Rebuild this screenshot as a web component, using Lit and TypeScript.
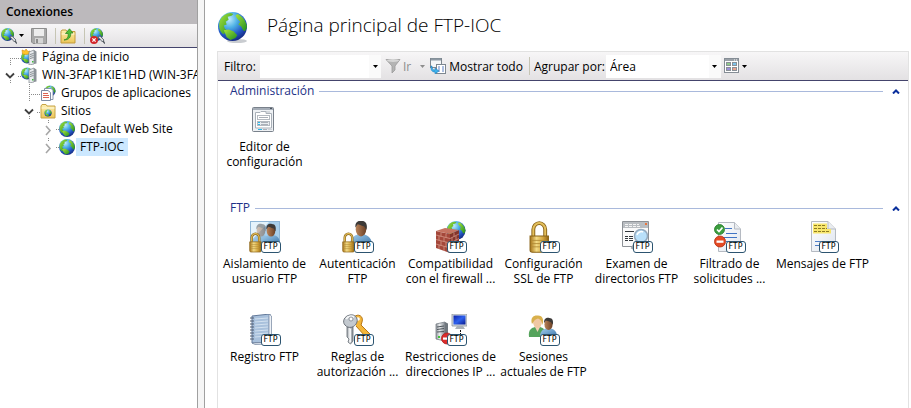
import { LitElement, html, svg, css, nothing, type TemplateResult } from "lit";
import { customElement, state } from "lit/decorators.js";
import { classMap } from "lit/directives/class-map.js";

/* ---------- shared drawing parts ---------- */

const defs = html`
  <svg class="defs" aria-hidden="true">
    <defs>
      <radialGradient id="sea" cx=".38" cy=".25" r=".8">
        <stop offset="0" stop-color="#c4ecfb" /><stop offset=".35" stop-color="#4fb2e6" />
        <stop offset=".7" stop-color="#2356c4" /><stop offset="1" stop-color="#14247a" />
      </radialGradient>
      <linearGradient id="land" x1="0" y1="0" x2="1" y2="1">
        <stop offset="0" stop-color="#a8e43c" /><stop offset="1" stop-color="#1d8c1f" />
      </linearGradient>
      <linearGradient id="gold" x1="0" y1="0" x2="1" y2="0">
        <stop offset="0" stop-color="#a87418" /><stop offset=".35" stop-color="#f3db86" />
        <stop offset=".7" stop-color="#d3a53c" /><stop offset="1" stop-color="#936514" />
      </linearGradient>
      <linearGradient id="steel" x1="0" y1="0" x2="1" y2="0">
        <stop offset="0" stop-color="#8d9399" /><stop offset=".4" stop-color="#eceef0" />
        <stop offset="1" stop-color="#7d848b" />
      </linearGradient>
      <linearGradient id="paper" x1="0" y1="0" x2="1" y2="1">
        <stop offset="0" stop-color="#ffffff" /><stop offset="1" stop-color="#dfe5ee" />
      </linearGradient>
      <linearGradient id="skin" x1="0" y1="0" x2="1" y2="0">
        <stop offset="0" stop-color="#b98258" /><stop offset="1" stop-color="#6b4127" />
      </linearGradient>
      <linearGradient id="shirt" x1="0" y1="0" x2="1" y2="1">
        <stop offset="0" stop-color="#a5d0ee" /><stop offset="1" stop-color="#3c76ab" />
      </linearGradient>
      <linearGradient id="folder" x1="0" y1="0" x2="0" y2="1">
        <stop offset="0" stop-color="#fdf0b2" /><stop offset="1" stop-color="#ecc556" />
      </linearGradient>
      <linearGradient id="screen" x1="0" y1="0" x2="1" y2="1">
        <stop offset="0" stop-color="#0a1fa8" /><stop offset=".5" stop-color="#2f62ee" />
        <stop offset="1" stop-color="#0a1a90" />
      </linearGradient>
    </defs>
  </svg>
`;

const globe = (cx: number, cy: number, r: number) => {
  const s = r / 15;
  return svg`<g transform="translate(${cx} ${cy}) scale(${s})">
    <circle r="15" fill="url(#sea)"/>
    <path d="M-13 -6C-11 -11 -6 -14 -2 -14L1 -13L-1 -11L-5 -10L-4 -7L-7 -5L-6 -2L-9 -1L-8 2L-6 4L-9 8C-13 6 -15 0 -13 -6Z" fill="url(#land)"/>
    <path d="M5 -13C10 -11 14 -6 15 0C14 4 13 6 11 4L9 0L6 -2L8 -5L5 -8L3 -11Z" fill="url(#land)"/>
    <path d="M-9 4L-4 3L1 5L5 9L3 12L-2 14L-6 11Z" fill="url(#land)"/>
  </g>`;
};

const padlock = (x: number, y: number, s: number) => svg`<g transform="translate(${x} ${y}) scale(${s})">
  <path d="M4 13V7a5.500 6 0 0 1 11 0V13" fill="none" stroke="#8a6418" stroke-width="3.600"/>
  <path d="M4 13V7a5.500 6 0 0 1 11 0V13" fill="none" stroke="#e3bf5c" stroke-width="1.800"/>
  <path d="M1 13H18V26Q18 28 16 28H3Q1 28 1 26Z" fill="url(#gold)" stroke="#8a6418"/>
  <path d="M2 17H17M2 20H17M2 23H17" stroke="#b08a35" stroke-width=".800"/>
</g>`;

const man = (x: number, y: number, s: number) => svg`<g transform="translate(${x} ${y}) scale(${s})">
  <path d="M0 22C0 15 4 13 8 12H12C17 13 20 16 20 22Z" fill="url(#shirt)"/>
  <ellipse cx="10" cy="7.500" rx="4.800" ry="6.500" fill="url(#skin)"/>
  <path d="M5 6C4 1 8 -1 11 0C15 0 16 4 15 8L13 5C10 4 8 3 7 3Z" fill="#3d3a38"/>
</g>`;

const tower = svg`<path d="M8 3L13 1V15L8 16Z" fill="#e9ecef" stroke="#7f868c" stroke-width=".700"/>
  <path d="M9 5.500L12.500 4.500M9 7.500L12.500 6.500M9 9.500L12.500 8.500" stroke="#6c7479" stroke-width=".800"/>
  <path d="M13 1L15.500 2.500V14.500L13 15Z" fill="#8b9298"/><rect x="11" y="12" width="1.500" height="1.500" fill="#41b83a"/>`;

const large = (body: unknown) => html`<svg class="i32" viewBox="0 0 32 32" aria-hidden="true">${body}</svg>`;
const small = (body: unknown) => html`<svg class="i16" viewBox="0 0 16 16" aria-hidden="true">${body}</svg>`;

const plug = svg`<path d="M9 9L11 8L15 12L13.500 14Z" fill="#d6d9dc" stroke="#60676e" stroke-width=".900"/>
  <path d="M14 13L16 15.500" stroke="#4d545b" stroke-width="1.400"/>`;

const icon16 = {
  connect: small(svg`${globe(6.5, 6.5, 6.5)}${plug}`),
  save: small(svg`<path d="M.500 .500H15.500V15.500H2L.500 14Z" fill="#a9a9a9" stroke="#8e8e8e"/>
    <rect x="3" y="1" width="10" height="7" fill="#ececec"/><rect x="4" y="10" width="8" height="5.500" fill="#d5d5d5"/>
    <rect x="5" y="11" width="2" height="4" fill="#8c8c8c"/>`),
  up: small(svg`<path d="M1 3.500L2 2H6L7 3.500H15V15H1Z" fill="url(#folder)" stroke="#c39b3c"/>
    <path d="M1.500 6H14.500" stroke="#fff8d8"/>
    <path d="M4 12C8 11 8.500 8 8 5.500H5.500L9.500 .800L13 5H10.700C11 9 9 12 4 12Z" fill="#51bf38" stroke="#24801b" stroke-width=".700"/>`),
  disconnect: small(svg`${globe(7.5, 6.5, 6.5)}${plug}<circle cx="5" cy="12" r="4" fill="#d2262b"/>
    <path d="M3.400 10.400L6.600 13.600M6.600 10.400L3.400 13.600" stroke="#fff" stroke-width="1.300"/>`),
  start: small(svg`${globe(6, 8.5, 6)}<path d="M1 1L4 2L5 0L7 2.500L9 2L8 5L5 5.500L1.500 5Z" fill="#ffc528" stroke="#d88d14" stroke-width=".600"/>${tower}`),
  server: small(svg`${globe(6, 6.5, 6)}${tower}`),
  pools: small(svg`${globe(10, 6, 5.5)}
    <path d="M4.500 3.500H11L13 5V14.500H4.500Z" fill="#fff" stroke="#7d8ca5" stroke-width=".900"/>
    <path d="M1.500 5.500H8L10.500 7.500V15.500H1.500Z" fill="#fff" stroke="#6f7f9b" stroke-width=".900"/>
    <path d="M3 8.500H8M3 10.500H9M3 12.500H9" stroke="#d9523f" stroke-width=".900"/>`),
  sites: small(svg`<path d="M1 3L2 1.500H6L7 3H15V15H1Z" fill="url(#folder)" stroke="#c7a245"/>
    <path d="M1.500 5H14.500" stroke="#fff9dd"/>${globe(8, 10, 3.6)}`),
  site: small(globe(8, 8, 8)),
  funnel: small(svg`<path d="M1 1.500H15L10 8V12L7 15V8Z" fill="#b4b4b4" stroke="#9a9a9a" stroke-width=".800"/>
    <ellipse cx="8" cy="2.500" rx="6" ry="1.400" fill="#d7d7d7"/>`),
  showAll: small(svg`<rect x=".500" y=".500" width="11" height="9" fill="#f4f6f8" stroke="#7d8790"/>
    <path d="M1 1.500H11" stroke="#8d98a3" stroke-width="2"/>
    <rect x="6.500" y="6.500" width="9" height="9" fill="#fff" stroke="#7d8790"/>
    <path d="M8 9H10M12 9H14M8 11H10M12 11H14M8 13H10M12 13H14" stroke="#5b7fc4"/>
    <path d="M2 8C2 11 3 12 5 12V10L9 13L5 16V14C2 14 .500 12 1 8Z" fill="#3fb2ea" stroke="#1674b8" stroke-width=".500"/>`),
  view: small(svg`<rect x=".500" y=".500" width="14" height="14" fill="#fff" stroke="#858d95"/>
    <path d="M1 2H14" stroke="#9aa1a8" stroke-width="2"/><path d="M10 2H11M12 2H13" stroke="#fff"/>
    <g stroke="#8a9097"><rect x="2.500" y="4.500" width="4" height="3" fill="#8fc98b"/><rect x="8.500" y="4.500" width="4" height="3" fill="#7ec3ea"/>
    <rect x="2.500" y="9.500" width="4" height="3" fill="#9a8fd8"/><rect x="8.500" y="9.500" width="4" height="3" fill="#e8a08c"/></g>`),
};

const icon32 = {
  globe: large(svg`<ellipse cx="19" cy="29" rx="10" ry="2" fill="#c9ccd0"/>${globe(14.5, 14.5, 14.5)}`),
  editor: large(svg`<rect x="3.500" y="3.500" width="21" height="24" rx="1" fill="#eef1f4" stroke="#79818b"/>
    <path d="M4 5H24" stroke="#a5adb7" stroke-width="2"/><path d="M21 4.500H23" stroke="#4d5560" stroke-width="1"/>
    <path d="M6.500 24V8.500H11L12 7.500H17V9.500H22.500V24Z" fill="#fff" stroke="#a9b0b8"/>
    <path d="M17 8H21" stroke="#b9bfc6" stroke-width="1"/>
    <rect x="8.500" y="11.500" width="12" height="4" fill="#fff" stroke="#b4bac1"/><path d="M10 13.500H19" stroke="#aab0b8"/>
    <rect x="8.500" y="17.500" width="12" height="4" fill="#e9edf0" stroke="#b4bac1"/><path d="M12 18.500H19M12 20.500H19" stroke="#aab0b8"/>
    <path d="M9 18.500H11M9 20.500H11" stroke="#27b7ea"/>
    <path d="M9 25.500H13" stroke="#27b7ea"/><path d="M14 25.500H18" stroke="#aab0b8"/><path d="M19 25.500H23" stroke="#cfd3d8"/>`),
  isolation: large(svg`<rect x="1.500" y=".500" width="29" height="23" fill="#a9cfeb" stroke="#8fb6d6"/>
    <path d="M2 1H20L2 20Z" fill="#e5f3fb"/><g opacity=".45">${man(3, 3, 0.9)}</g>${man(13, 3, 0.9)}${padlock(0, 12, 0.68)}`),
  auth: large(svg`${man(8, 0, 1.1)}${padlock(0, 12, 0.68)}`),
  firewall: large(svg`${globe(21, 9.5, 9.5)}
    <path d="M1 10L15 13V32L1 27Z" fill="#a4473a"/><path d="M15 13L24 9V27L15 32Z" fill="#84342b"/><path d="M1 10L10 7L24 9L15 13Z" fill="#c67462"/>
    <path d="M1 14L15 17.500L24 13M1 18.500L15 22L24 17.500M1 23L15 27L24 22M6 11V15.500M11 12.500V16.500M4 15V19.500M9 16.500V20.500M6 20V24.500M11 21V26M4 24V28M9 25.500V30M19 11.500V15.500M17 16.500V21M21 15V19.500M19 20.500V25" fill="none" stroke="#dca090" stroke-width=".700"/>`),
  lock: large(padlock(1, 1, 1.08)),
  browse: large(svg`<path d="M1.500 .500H27.500V25.500H1.500Z" fill="#fafafa" stroke="#8d9196"/>
    <rect x="2" y="1" width="25" height="6" fill="#b9bdc1"/><path d="M4 3.500H18M4 5.500H20" stroke="#f4f4f4" stroke-dasharray="3 1"/><rect x="24" y="2" width="2" height="2" fill="#e8743c"/>
    <path d="M4 10.500H13M4 15.500H7M4 17.500H7M4 19.500H7M8 15.500H12M8 17.500H12M8 19.500H12" stroke="#33383d" stroke-width="1"/>
    <path d="M15 21L11 28" stroke="#9ea4aa" stroke-width="3"/>
    <circle cx="20" cy="15" r="6.500" fill="#b9e0fa" stroke="#94a9bd" stroke-width="1.500"/><path d="M16 14C17 11 20 10 22 11" stroke="#fff" stroke-width="1.500" fill="none"/>`),
  filter: large(svg`<path d="M4.500 1.500H20.500L26.500 8V30.500H4.500Z" fill="url(#paper)" stroke="#b5bac2"/><path d="M20.500 1.500V8H26.500" fill="#e9ecef" stroke="#b5bac2"/>
    <path d="M11 7.500H18M12 12.500H23M9 16.500H23M12 20.500H23" stroke="#3f74c4" stroke-width="1.200"/>
    <circle cx="5.500" cy="8.500" r="5" fill="#3c9e3e" stroke="#237a2a" stroke-width=".800"/><path d="M3 8.500L5 10.500L8.500 6.500" fill="none" stroke="#fff" stroke-width="1.700"/>
    <circle cx="6" cy="20.500" r="5.500" fill="#e44a24" stroke="#b52e12" stroke-width=".800"/><rect x="2.500" y="19.500" width="7" height="2.300" fill="#fff"/>`),
  messages: large(svg`<path d="M4.500 .500H21L28.500 8V30.500H4.500Z" fill="url(#paper)" stroke="#b5bac2"/><path d="M21 .500V8H28.500" fill="#e9ecef" stroke="#b5bac2"/>
    <path d="M6 2.500H20V8H24V12.500H6Z" fill="#f8e66c"/>
    <path d="M7 4.500H18M7 7.500H20M7 10.500H23" stroke="#8c7b22" stroke-dasharray="3 1"/><path d="M8 20.500H16M8 24.500H14" stroke="#4d7dc8" stroke-width="1.200"/>`),
  log: large(svg`<path d="M3 2L21 0V28L3 29Z" fill="#a9c1dc" stroke="#63799a"/><path d="M20 0L22.500 2V30L20 28Z" fill="#eef2f7" stroke="#71829c" stroke-width=".700"/>
    <path d="M3 29L20 28L22.500 30L6 30.500Z" fill="#dfe7f0" stroke="#71829c" stroke-width=".700"/>
    <path d="M6 5L19 4M6 8L19 7M6 11L19 10M6 14L19 13M6 17L19 16M6 20L19 19M6 23L19 22" stroke="#d3e1f0" stroke-width="1"/>
    <path d="M1 4H5M1 7H5M1 10H5M1 13H5M1 16H5M1 19H5M1 22H5M1 25H5" stroke="#525f72" stroke-width="1.200"/>`),
  rules: large(svg`<path d="M12 3C16 -1 22 2 20 8L19 11L28 20L27 24L23 22L14 12" fill="#f3b63a" stroke="#b87716"/>
    <circle cx="16" cy="5" r="1.800" fill="#fff"/><path d="M5 13L11 13L11 27L8.500 30L6 28L7 25L5 23Z" fill="url(#steel)" stroke="#72787f" stroke-width=".900"/>
    <path d="M8 1C13 0 16 4 15 8C13 14 6 15 3 11C0 8 2 2 8 1Z" fill="#c3c9cf" stroke="#6d737b"/><path d="M4 5Q7 1 12 3" stroke="#f4f6f7" stroke-width="2" fill="none"/>
    <circle cx="9" cy="5" r="2" fill="#fff" stroke="#7b828a" stroke-width=".800"/><path d="M8.500 15V28" stroke="#f4f5f6"/>`),
  restrict: large(svg`<path d="M1 10L10 8V27L1 25Z" fill="url(#steel)" stroke="#787f86" stroke-width=".800"/><path d="M10 8L13 9.500V26L10 27Z" fill="#6f767d"/>
    <path d="M2 13L9 12M2 15.500L9 14.500M2 18L9 17.500" stroke="#4e555c"/><path d="M4 22V24" stroke="#42c43a" stroke-width="2"/>
    <path d="M17 0H32V12H17Z" fill="#d5dae0" stroke="#8b9299" stroke-width=".800"/><rect x="18.500" y="1.500" width="12" height="9" fill="url(#screen)"/>
    <path d="M20 15H30L28 12H22Z" fill="#aab1b8"/><path d="M25.500 16V21" stroke="#111" stroke-dasharray="2 1"/>
    <circle cx="12" cy="24.500" r="5.500" fill="#dc2c2c" stroke="#a81a1a" stroke-width=".700"/><rect x="8" y="23.500" width="7" height="2.200" fill="#fff"/>`),
  sessions: large(svg`<path d="M1 23C0 15 4 14 7 13H12C16 14 18 16 17 23Z" fill="#55a35c"/><path d="M7 13L9.500 18L12 13Z" fill="#f2d0b2"/>
    <ellipse cx="9.500" cy="8" rx="4.500" ry="6" fill="#f0c8a4"/><path d="M4 10C2 3 6 1 10 1.500C15 1.500 16 6 14.500 11C14 7 12 5 10 4.500C7 5 6 7 4 10Z" fill="#d9b04c"/>${man(12, 4, 0.85)}`),
};

/* ---------- data ---------- */

interface Node { label: string; icon: TemplateResult; depth: number; open?: boolean; line?: boolean }
interface Feature { icon: TemplateResult; lines: string[]; ftp?: boolean }
interface Group { name: string; items: Feature[] }

const nodes: Node[] = [
  { label: "Página de inicio", icon: icon16.start, depth: 0, line: true },
  { label: "WIN-3FAP1KIE1HD (WIN-3FAP1KIE1HD\\Administrador)", icon: icon16.server, depth: 0, open: true },
  { label: "Grupos de aplicaciones", icon: icon16.pools, depth: 1, line: true },
  { label: "Sitios", icon: icon16.sites, depth: 1, open: true },
  { label: "Default Web Site", icon: icon16.site, depth: 2, open: false },
  { label: "FTP-IOC", icon: icon16.site, depth: 2, open: false },
];

const groups: Group[] = [
  { name: "Administración", items: [{ icon: icon32.editor, lines: ["Editor de", "configuración"] }] },
  {
    name: "FTP",
    items: [
      { icon: icon32.isolation, lines: ["Aislamiento de", "usuario FTP"], ftp: true },
      { icon: icon32.auth, lines: ["Autenticación", "FTP"], ftp: true },
      { icon: icon32.firewall, lines: ["Compatibilidad", "con el firewall ..."], ftp: true },
      { icon: icon32.lock, lines: ["Configuración", "SSL de FTP"], ftp: true },
      { icon: icon32.browse, lines: ["Examen de", "directorios FTP"], ftp: true },
      { icon: icon32.filter, lines: ["Filtrado de", "solicitudes ..."], ftp: true },
      { icon: icon32.messages, lines: ["Mensajes de FTP"], ftp: true },
      { icon: icon32.log, lines: ["Registro FTP"], ftp: true },
      { icon: icon32.rules, lines: ["Reglas de", "autorización ..."], ftp: true },
      { icon: icon32.restrict, lines: ["Restricciones de", "direcciones IP ..."], ftp: true },
      { icon: icon32.sessions, lines: ["Sesiones", "actuales de FTP"], ftp: true },
    ],
  },
];

const caret = html`<svg class="caret" viewBox="0 0 5 3" aria-hidden="true"><path d="M0 0H5L2.500 3Z" fill="currentColor" /></svg>`;

/* Branch lines and expander arrow at the left of a tree row. */
const gutter = (n: Node) => html`<svg class="gutter" viewBox="0 0 19 18" aria-hidden="true">
  ${n.line
    ? svg`<path d="M8.500 ${n.depth ? 0 : 10}V18M8 10.500H19" fill="none" stroke="#8a8a8a" stroke-dasharray="1 1"/>`
    : n.open
      ? svg`<path d="M8.500 14V18M16 10.500H19" stroke="#8a8a8a" stroke-dasharray="1 1"/><path d="M4 7.500L8 11.500L12 7.500" fill="none" stroke="#404040" stroke-width="1.800"/>`
      : svg`<path d="M8.500 0V3M16 9.500H19" stroke="#8a8a8a" stroke-dasharray="1 1"/><path d="M6 6L10 10.500L6 15" fill="none" stroke="#a6a6a6" stroke-width="1.600"/>`}
</svg>`;

@customElement("app-root")
export class AppRoot extends LitElement {
  @state() private selected = "FTP-IOC";

  static styles = css`
    :host {
      display: flex;
      min-height: 100vh;
      background: #fff;
      color: #000;
      font: 12px/15px "Open Sans", "Noto Sans", sans-serif;
      --bar: linear-gradient(#f7f6f7, #e3e1e3);
    }
    *, *::before { box-sizing: border-box; }
    button, input, select { font: inherit; color: inherit; margin: 0; border: 0; border-radius: 0; background: none; padding: 0; }
    h1, h2, ul { margin: 0; padding: 0; font-weight: normal; list-style: none; }
    svg { display: block; flex: none; }
    .defs { position: absolute; width: 0; height: 0; }
    .i16 { width: 16px; height: 16px; }
    .i32 { width: 32px; height: 32px; }
    .caret { width: 5px; height: 3px; }

    .side { flex: none; width: 197px; overflow: hidden; }
    .side-title { height: 24px; padding-left: 6px; background: #bcb9bc; line-height: 24px; font-weight: 600; }
    .side-tools { display: flex; align-items: center; height: 24px; padding-left: 1px; background: var(--bar); border-bottom: 1px solid #44446c; }
    .side-tools button { display: flex; align-items: center; gap: 2px; }
    .save { margin-left: 7px; }
    .sep { width: 1px; height: 16px; background: #c6c5b4; }
    .side-tools .sep { margin: 0 4px 0 8px; }
    .row { display: flex; align-items: center; width: 100%; height: 18px; white-space: nowrap; }
    .d0 { padding-left: 2px; }
    .d1 { padding-left: 21px; }
    .d2 { padding-left: 40px; }
    .gutter { width: 19px; height: 18px; }
    .name { margin-left: 1px; padding: 0 4px; line-height: 18px; }
    .on .name { background: #cce8ff; }

    .splitter { flex: none; width: 8px; background: #f5f5f5; border: solid #a0a0a0; border-width: 0 1px; }

    .main { flex: 1; min-width: 0; display: flex; flex-direction: column; padding: 0 2px 0 12px; }
    .head { display: flex; align-items: center; gap: 17px; height: 51px; padding: 5px 0 0 1px; }
    .head h1 { font-size: 19px; line-height: 28px; font-weight: 300; padding-bottom: 6px; }
    .box { flex: 1; border: 1px solid #e2e2e2; border-bottom: 0; }
    .tools { display: flex; align-items: center; height: 29px; padding-left: 6px; background: var(--bar); border-bottom: 1px solid #44446c; white-space: nowrap; }
    .tools button { display: flex; align-items: center; gap: 3px; }
    .tools label { min-width: 36px; }
    .combo { display: flex; align-items: center; width: 121px; height: 23px; background: #fff; }
    .combo input, .combo select { flex: 1; min-width: 0; height: 23px; padding: 0 4px; appearance: none; outline: 0; }
    .combo .drop { display: flex; align-items: center; justify-content: center; width: 12px; height: 23px; background: #fafafa; }
    .tools .go { margin-left: 4px; gap: 2px; color: #8d8d8d; }
    .tools .more { margin: 0 5px 0 9px; color: #8d8d8d; }
    .tools .sep { margin: 0 4px 0 6px; height: 18px; }
    .tools .by { min-width: 72px; }
    .area { width: 115px; }
    .tools .view { margin-left: 3px; gap: 2px; }

    .group + .group { margin-top: 4px; }
    .group-head { display: flex; align-items: center; gap: 5px; height: 20px; padding: 0 8px 0 12px; }
    .group-head h2 { font-size: 12px; line-height: 20px; color: #1e3287; }
    .rule { flex: 1; height: 1px; background: #a9b9dc; }
    .fold { width: 8px; height: 5px; margin-left: 4px; }
    .fold svg { width: 8px; height: 5px; }
    .grid { display: grid; grid-template-columns: repeat(auto-fill, 93px); grid-auto-rows: 93px; }
    .item { display: flex; flex-direction: column; align-items: center; gap: 3px; padding-top: 3px; text-align: center; white-space: nowrap; }
    .pic { position: relative; }
    .line { display: block; }
    .badge { position: absolute; right: 0; bottom: 0; width: 20px; height: 12px; border: 1px solid #2c5470; border-radius: 3px; background: #fff; font: 8px/10px "DejaVu Sans", sans-serif; text-align: center; }
  `;

  private row(n: Node) {
    const on = n.label === this.selected;
    return html`<li role="none">
      <button role="treeitem" aria-selected=${on} aria-expanded=${n.open === undefined ? nothing : n.open}
        class=${classMap({ row: true, [`d${n.depth}`]: true, on })} @click=${() => (this.selected = n.label)}>
        ${gutter(n)}${n.icon}<span class="name">${n.label}</span>
      </button>
    </li>`;
  }

  private group(g: Group) {
    return html`<section class="group">
      <div class="group-head">
        <h2>${g.name}</h2><span class="rule"></span>
        <button class="fold" aria-label="Contraer ${g.name}">
          <svg viewBox="0 0 8 5" aria-hidden="true"><path d="M1 4.500L4 1.500L7 4.500" fill="none" stroke="#0a2f9c" stroke-width="2" /></svg>
        </button>
      </div>
      <div class="grid">
        ${g.items.map((f) => html`<button class="item">
          <span class="pic">${f.icon}${f.ftp ? html`<span class="badge">FTP</span>` : nothing}</span>
          <span>${f.lines.map((l) => html`<span class="line">${l}</span>`)}</span>
        </button>`)}
      </div>
    </section>`;
  }

  render() {
    return html`${defs}
      <nav class="side">
        <div class="side-title">Conexiones</div>
        <div class="side-tools">
          <button aria-label="Conectar">${icon16.connect}${caret}</button>
          <button class="save" aria-label="Guardar">${icon16.save}</button>
          <span class="sep"></span>
          <button aria-label="Subir">${icon16.up}</button>
          <span class="sep"></span>
          <button aria-label="Desconectar">${icon16.disconnect}</button>
        </div>
        <ul role="tree">${nodes.map((n) => this.row(n))}</ul>
      </nav>
      <div class="splitter"></div>
      <main class="main">
        <header class="head">${icon32.globe}<h1>Página principal de FTP-IOC</h1></header>
        <div class="box">
          <div class="tools">
            <label for="filter">Filtro:</label>
            <span class="combo"><input id="filter" type="text" /><button class="drop" aria-label="Filtros">${caret}</button></span>
            <button class="go" disabled>${icon16.funnel}Ir</button>
            <button class="more" disabled aria-label="Opciones">${caret}</button>
            <button>${icon16.showAll}Mostrar todo</button>
            <span class="sep"></span>
            <label class="by" for="area">Agrupar por:</label>
            <span class="combo area"><select id="area"><option>Área</option></select><span class="drop">${caret}</span></span>
            <button class="view" aria-label="Vista">${icon16.view}${caret}</button>
          </div>
          ${groups.map((g) => this.group(g))}
        </div>
      </main>`;
  }
}
